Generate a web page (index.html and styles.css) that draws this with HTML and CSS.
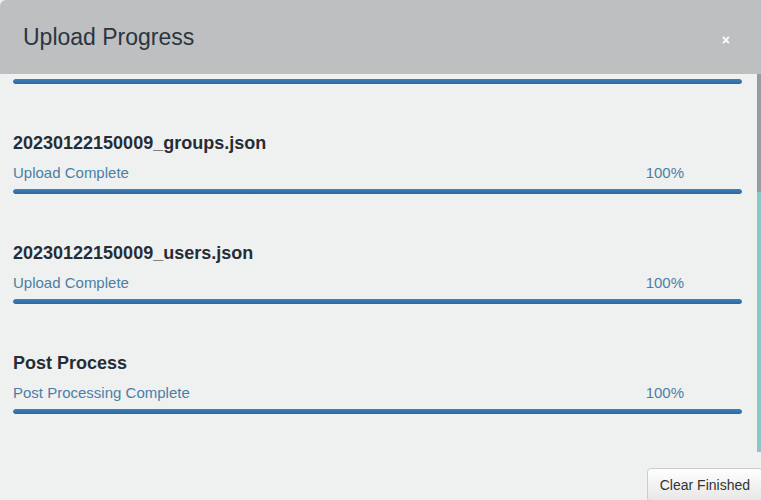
FILE: index.html
```html
<!DOCTYPE html>
<html>
<head>
<meta charset="utf-8">
<link rel="stylesheet" href="styles.css">
</head>
<body>
<div class="modal">
  <div class="modal-header">
    <h3 class="modal-title">Upload Progress</h3>
    <button class="close" type="button">×</button>
  </div>
  <div class="modal-body">
    <div class="scroll-content">
      <div class="bar bar-first"><div class="bar-fill" style="width:100%"></div></div>
      <div class="item">
        <h4 class="item-title">20230122150009_groups.json</h4>
        <div class="status"><span>Upload Complete</span><span>100%</span></div>
        <div class="bar"><div class="bar-fill" style="width:100%"></div></div>
      </div>
      <div class="item">
        <h4 class="item-title">20230122150009_users.json</h4>
        <div class="status"><span>Upload Complete</span><span>100%</span></div>
        <div class="bar"><div class="bar-fill" style="width:100%"></div></div>
      </div>
      <div class="item">
        <h4 class="item-title">Post Process</h4>
        <div class="status"><span>Post Processing Complete</span><span>100%</span></div>
        <div class="bar"><div class="bar-fill" style="width:100%"></div></div>
      </div>
    </div>
    <div class="scrollbar"><div class="thumb"></div><div class="track"></div></div>
  </div>
  <div class="modal-footer">
    <button class="btn" type="button">Clear Finished</button>
  </div>
</div>
</body>
</html>
```

FILE: styles.css
```css
html, body {
  margin: 0;
  padding: 0;
  background: #eff1f0;
  overflow: hidden;
  font-family: "Liberation Sans", Arial, sans-serif;
}
.modal {
  width: 778px;
  height: 520px;
  background: #eff1f0;
  display: flex;
  flex-direction: column;
}
.modal-header {
  flex-shrink: 0;
  height: 74px;
  box-sizing: border-box;
  background: #bebfc0;
  border-top-left-radius: 6px;
  display: flex;
  align-items: center;
  justify-content: space-between;
  padding: 0 48px 0 23px;
}
.modal-title {
  margin: 0;
  font-size: 23px;
  font-weight: normal;
  color: #2a3540;
  line-height: 26px;
}
.close {
  background: none;
  border: 0;
  padding: 0;
  color: #ffffff;
  font-family: "Liberation Sans", Arial, sans-serif;
  font-size: 14px;
  font-weight: bold;
  line-height: 14px;
  position: relative;
  top: 3px;
}
.modal-body {
  flex-shrink: 0;
  height: 378px;
  display: flex;
}
.scroll-content {
  width: 757px;
  box-sizing: border-box;
  padding: 0 15px 0 13px;
  overflow: hidden;
}
.scrollbar {
  flex: 1;
  display: flex;
  flex-direction: column;
}
.thumb {
  height: 118px;
  background: linear-gradient(to right, #97989b, #b3b4b6);
}
.track {
  height: 260px;
  background: #8fc4c7;
}
.bar {
  height: 5px;
  border-radius: 3px;
  background: #d8dadb;
  overflow: hidden;
}
.bar-fill {
  height: 100%;
  background: linear-gradient(to bottom, #3d82bc, #2b689e);
  border-radius: 3px;
}
.bar-first {
  margin-top: 5px;
}
.item {
  margin-top: 49px;
}
.item-title {
  margin: 0;
  font-size: 18px;
  font-weight: bold;
  line-height: 20px;
  color: #262d35;
}
.status {
  margin-top: 10px;
  margin-bottom: 6px;
  display: flex;
  justify-content: space-between;
  padding-right: 58px;
  font-size: 15px;
  line-height: 20px;
  color: #4c7ea4;
}
.modal-footer {
  flex: 1;
  display: flex;
  justify-content: flex-end;
  align-items: flex-start;
  padding: 16px 15px 0 0;
}
.btn {
  font-family: "Liberation Sans", Arial, sans-serif;
  font-size: 14px;
  line-height: 20px;
  color: #333333;
  padding: 6px 12px;
  border: 1px solid #cccccc;
  border-radius: 4px;
  background: linear-gradient(to bottom, #ffffff, #e6e6e6);
}
```
